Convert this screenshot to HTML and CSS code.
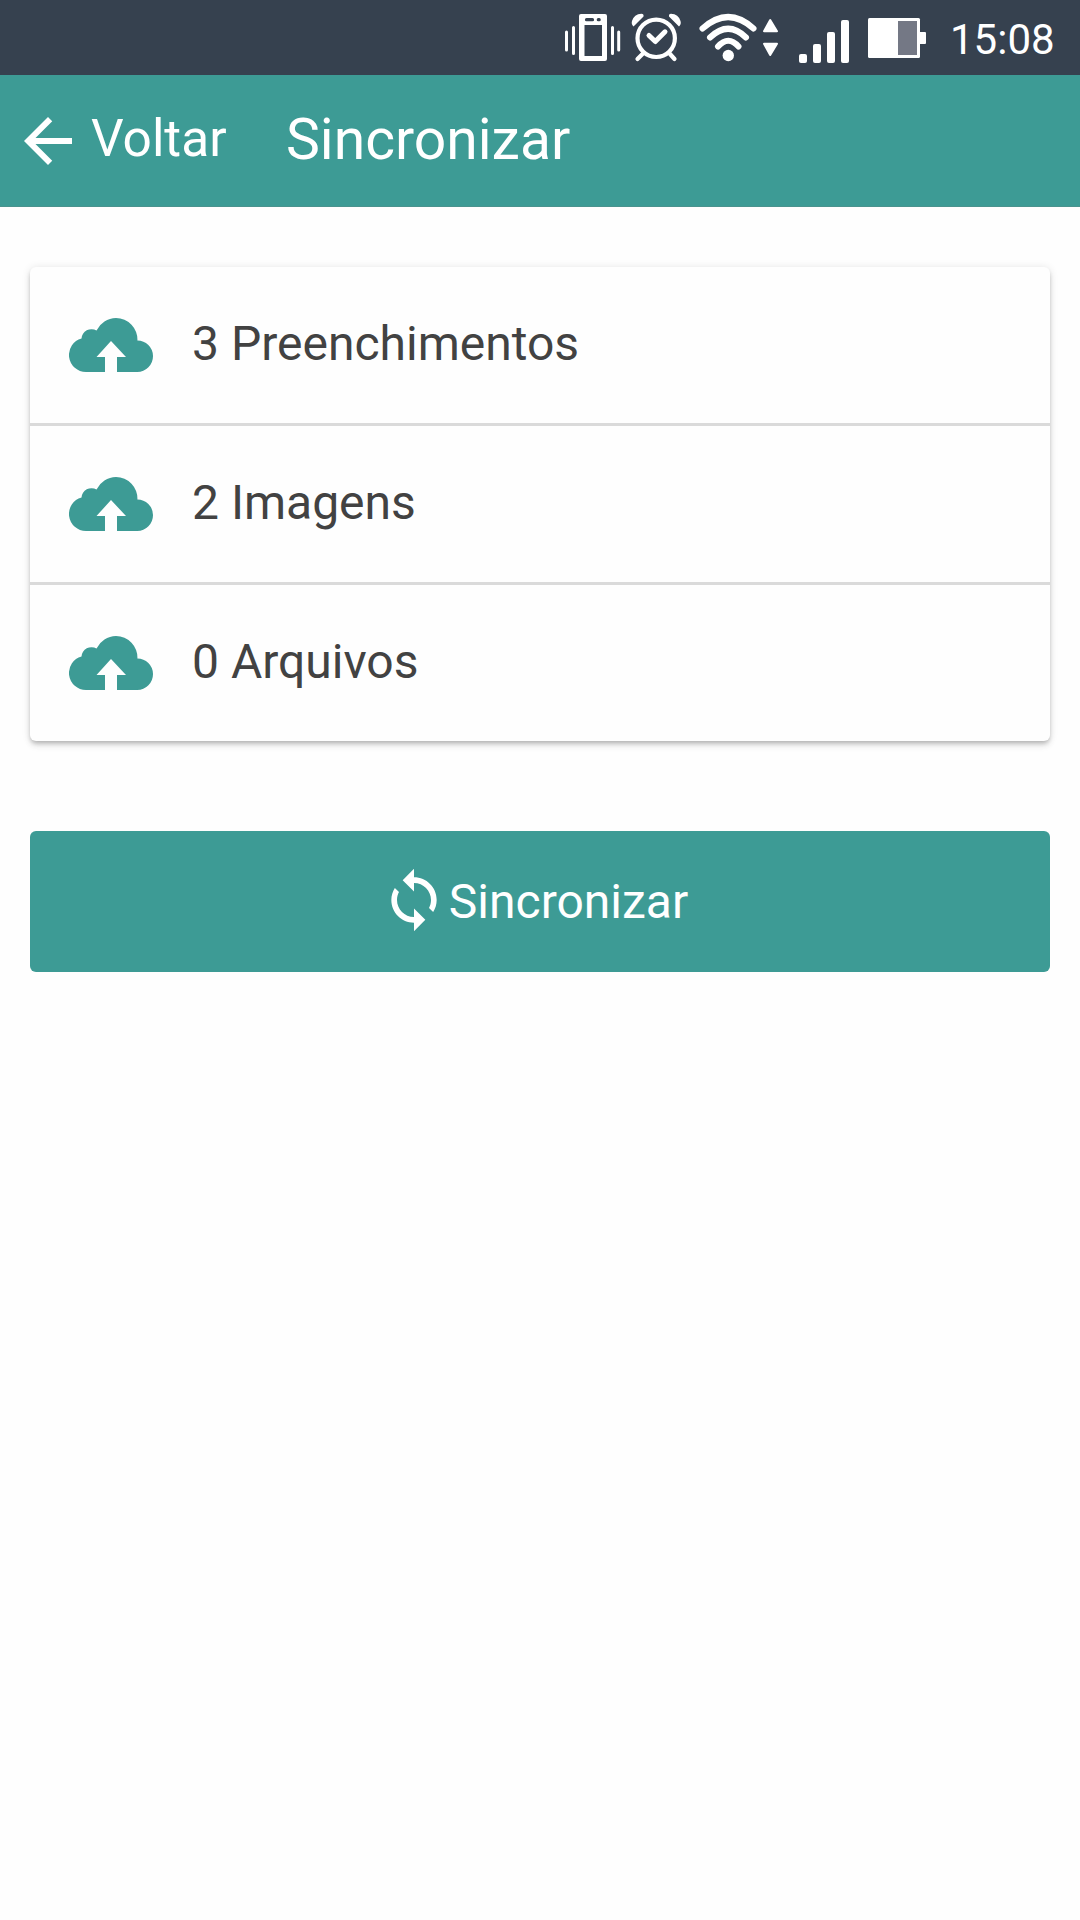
FILE: index.html
```html
<!DOCTYPE html>
<html lang="pt-BR">
<head>
<meta charset="utf-8">
<title>Sincronizar</title>
<link rel="stylesheet" href="styles.css">
</head>
<body>
<svg class="defs" aria-hidden="true">
  <symbol id="cloud-upload" viewBox="0 0 84 54">
    <path d="M36 54H17A17 17 0 0 1 12.500 20.600A10 10 0 0 1 27.500 12.500A22 22 0 0 1 47 0A21.500 21.500 0 0 1 68.400 22.500A15.700 15.700 0 0 1 84 38A15.900 15.900 0 0 1 68.200 54H48V39H57L42 23L27.500 39H36Z"/>
  </symbol>
</svg>
<div class="status-bar">
  <svg class="status-icon" width="60" height="75" viewBox="563 0 60 75">
    <path fill-rule="evenodd" d="M581 14H605Q607 14 607 16V59Q607 61 605 61H581Q579 61 579 59V16Q579 14 581 14ZM584.500 25V56H602V25Z"/>
    <path class="slot" d="M586.500 19.700H592.500M598.300 19.700H599.200"/>
    <path class="stroke thin" d="M566.500 32V50M573.500 27.500V53.500M612.500 27.500V53.500M618.700 32V50"/>
  </svg>
  <svg class="status-icon alarm" width="54" height="75" viewBox="629 0 54 75">
    <path d="M633.500 26.500Q631 24 632 21Q634 14 641.500 13.700Q644 14 643.500 16.500ZM679 26.500Q681.500 24 680.500 21Q678.500 14 671 13.700Q668.500 14 669 16.500Z"/>
    <circle class="stroke ring" cx="656.2" cy="38.300" r="18.700"/>
    <path class="stroke ring" d="M642.500 54L637.500 59M670 54L674.500 59"/>
    <path class="stroke check" d="M649 35.500L655.300 41.500L665 31.800"/>
  </svg>
  <svg class="status-icon wifi" width="80" height="75" viewBox="699 0 80 75">
    <path class="stroke wave" d="M702.500 28.500Q728.300 5.500 753.500 28.500M710 37.500Q728.300 20 746 37.500M718 46.500Q728.300 35 738.500 46.500"/>
    <circle cx="728.300" cy="55.500" r="5.700"/>
    <path class="arrows" d="M770.200 20L764 31.200H777ZM770.200 55L764 43.800H777Z"/>
  </svg>
  <svg class="status-icon signal" width="50" height="75" viewBox="799 0 50 75">
    <rect x="799" y="54" width="8" height="9" rx="2"/>
    <rect x="813" y="44" width="8" height="19" rx="2"/>
    <rect x="827" y="32" width="8" height="31" rx="2"/>
    <rect x="841" y="20" width="8" height="43" rx="2"/>
  </svg>
  <svg class="status-icon battery" width="58" height="75" viewBox="868 0 58 75">
    <rect x="868" y="18" width="52" height="40" rx="1.500"/>
    <rect x="919" y="32" width="7" height="12" rx="1"/>
    <rect class="empty" x="898" y="21" width="19" height="34"/>
  </svg>
  <span class="clock">15:08</span>
</div>
<header class="toolbar">
  <a class="back">
    <svg width="72" height="72" viewBox="0 0 24 24"><path d="M20 11H7.830l5.590-5.590L12 4l-8 8 8 8 1.410-1.410L7.830 13H20z"/></svg>
    <span class="back-label">Voltar</span>
  </a>
  <h1 class="title">Sincronizar</h1>
</header>
<main class="content">
  <ul class="card">
    <li class="row"><svg class="cloud"><use href="#cloud-upload"/></svg><span>3 Preenchimentos</span></li>
    <li class="row"><svg class="cloud"><use href="#cloud-upload"/></svg><span>2 Imagens</span></li>
    <li class="row"><svg class="cloud"><use href="#cloud-upload"/></svg><span>0 Arquivos</span></li>
  </ul>
  <button class="sync">
    <svg class="sync-icon" width="68" height="68" viewBox="0 0 24 24"><path d="M12 4V1L8 5l4 4V6c3.310 0 6 2.690 6 6 0 1.010-.25 1.970-.7 2.800l1.460 1.460C19.540 15.030 20 13.570 20 12c0-4.420-3.580-8-8-8zm0 14c-3.310 0-6-2.690-6-6 0-1.010.25-1.970.7-2.800L5.240 7.740C4.460 8.970 4 10.430 4 12c0 4.420 3.580 8 8 8v3l4-4-4-4v3z"/></svg>
    <span>Sincronizar</span>
  </button>
</main>
</body>
</html>
```
FILE: styles.css
```css
* { box-sizing: border-box; }
body {
  margin: 0;
  min-height: 1920px;
  background: #fefefe;
  font-family: Roboto, sans-serif;
  color: #424242;
}
svg { display: block; flex: none; fill: #fff; }
.defs { position: absolute; width: 0; height: 0; }

.status-bar {
  display: flex;
  height: 75px;
  padding-left: 563px;
  background: #36414f;
  color: #fff;
}
.stroke { fill: none; stroke: #fff; stroke-linecap: round; stroke-linejoin: round; }
.thin { stroke-width: 3; }
.ring { stroke-width: 4.200; }
.check { stroke-width: 5; }
.wave { stroke-width: 6; }
.slot { stroke: #36414f; stroke-width: 3.200; stroke-linecap: round; }
.arrows { stroke: #fff; stroke-width: 2; stroke-linejoin: round; }
.empty { fill: #747885; }
.alarm { margin-left: 6px; }
.wifi { margin-left: 16px; }
.signal { margin-left: 20px; }
.battery { margin-left: 19px; }
.clock {
  margin-left: 24px;
  font-size: 42px;
  line-height: 80px;
}

.toolbar {
  display: flex;
  align-items: center;
  height: 132px;
  padding-left: 12px;
  background: #3d9b95;
  border-bottom: 1px solid #4b938e;
  color: #fff;
}
.back { display: flex; align-items: center; width: 274px; }
.back-label { margin-left: 7px; font-size: 51.4px; line-height: 60px; margin-top: -4px; }
.title { margin: -2px 0 0; font-size: 57px; font-weight: 400; line-height: 68px; }

.content { padding: 60px 30px; }
.card {
  margin: 0;
  padding: 0;
  list-style: none;
  background: #fefefe;
  border-radius: 6px;
  box-shadow: 0 6px 6px rgba(0, 0, 0, .06), 0 3px 4px -1px rgba(0, 0, 0, .2), 0 1px 9px rgba(0, 0, 0, .12);
}
.row {
  display: flex;
  align-items: center;
  height: 156px;
  padding-left: 39px;
  gap: 39px;
  font-size: 48px;
  line-height: 56px;
}
.row + .row { height: 159px; border-top: 3px solid #dadada; }
.row span { margin-top: -3px; }
.cloud { width: 84px; height: 54px; fill: #3d9b95; }
.sync {
  display: flex;
  align-items: center;
  justify-content: center;
  width: 100%;
  height: 141px;
  margin-top: 90px;
  padding: 0 12px 0 0;
  border: 0;
  border-radius: 6px;
  background: #3d9b95;
  color: #fff;
  font: 400 48px/56px Roboto, sans-serif;
}
.sync-icon { margin: 0 1px 3px 0; }
```
